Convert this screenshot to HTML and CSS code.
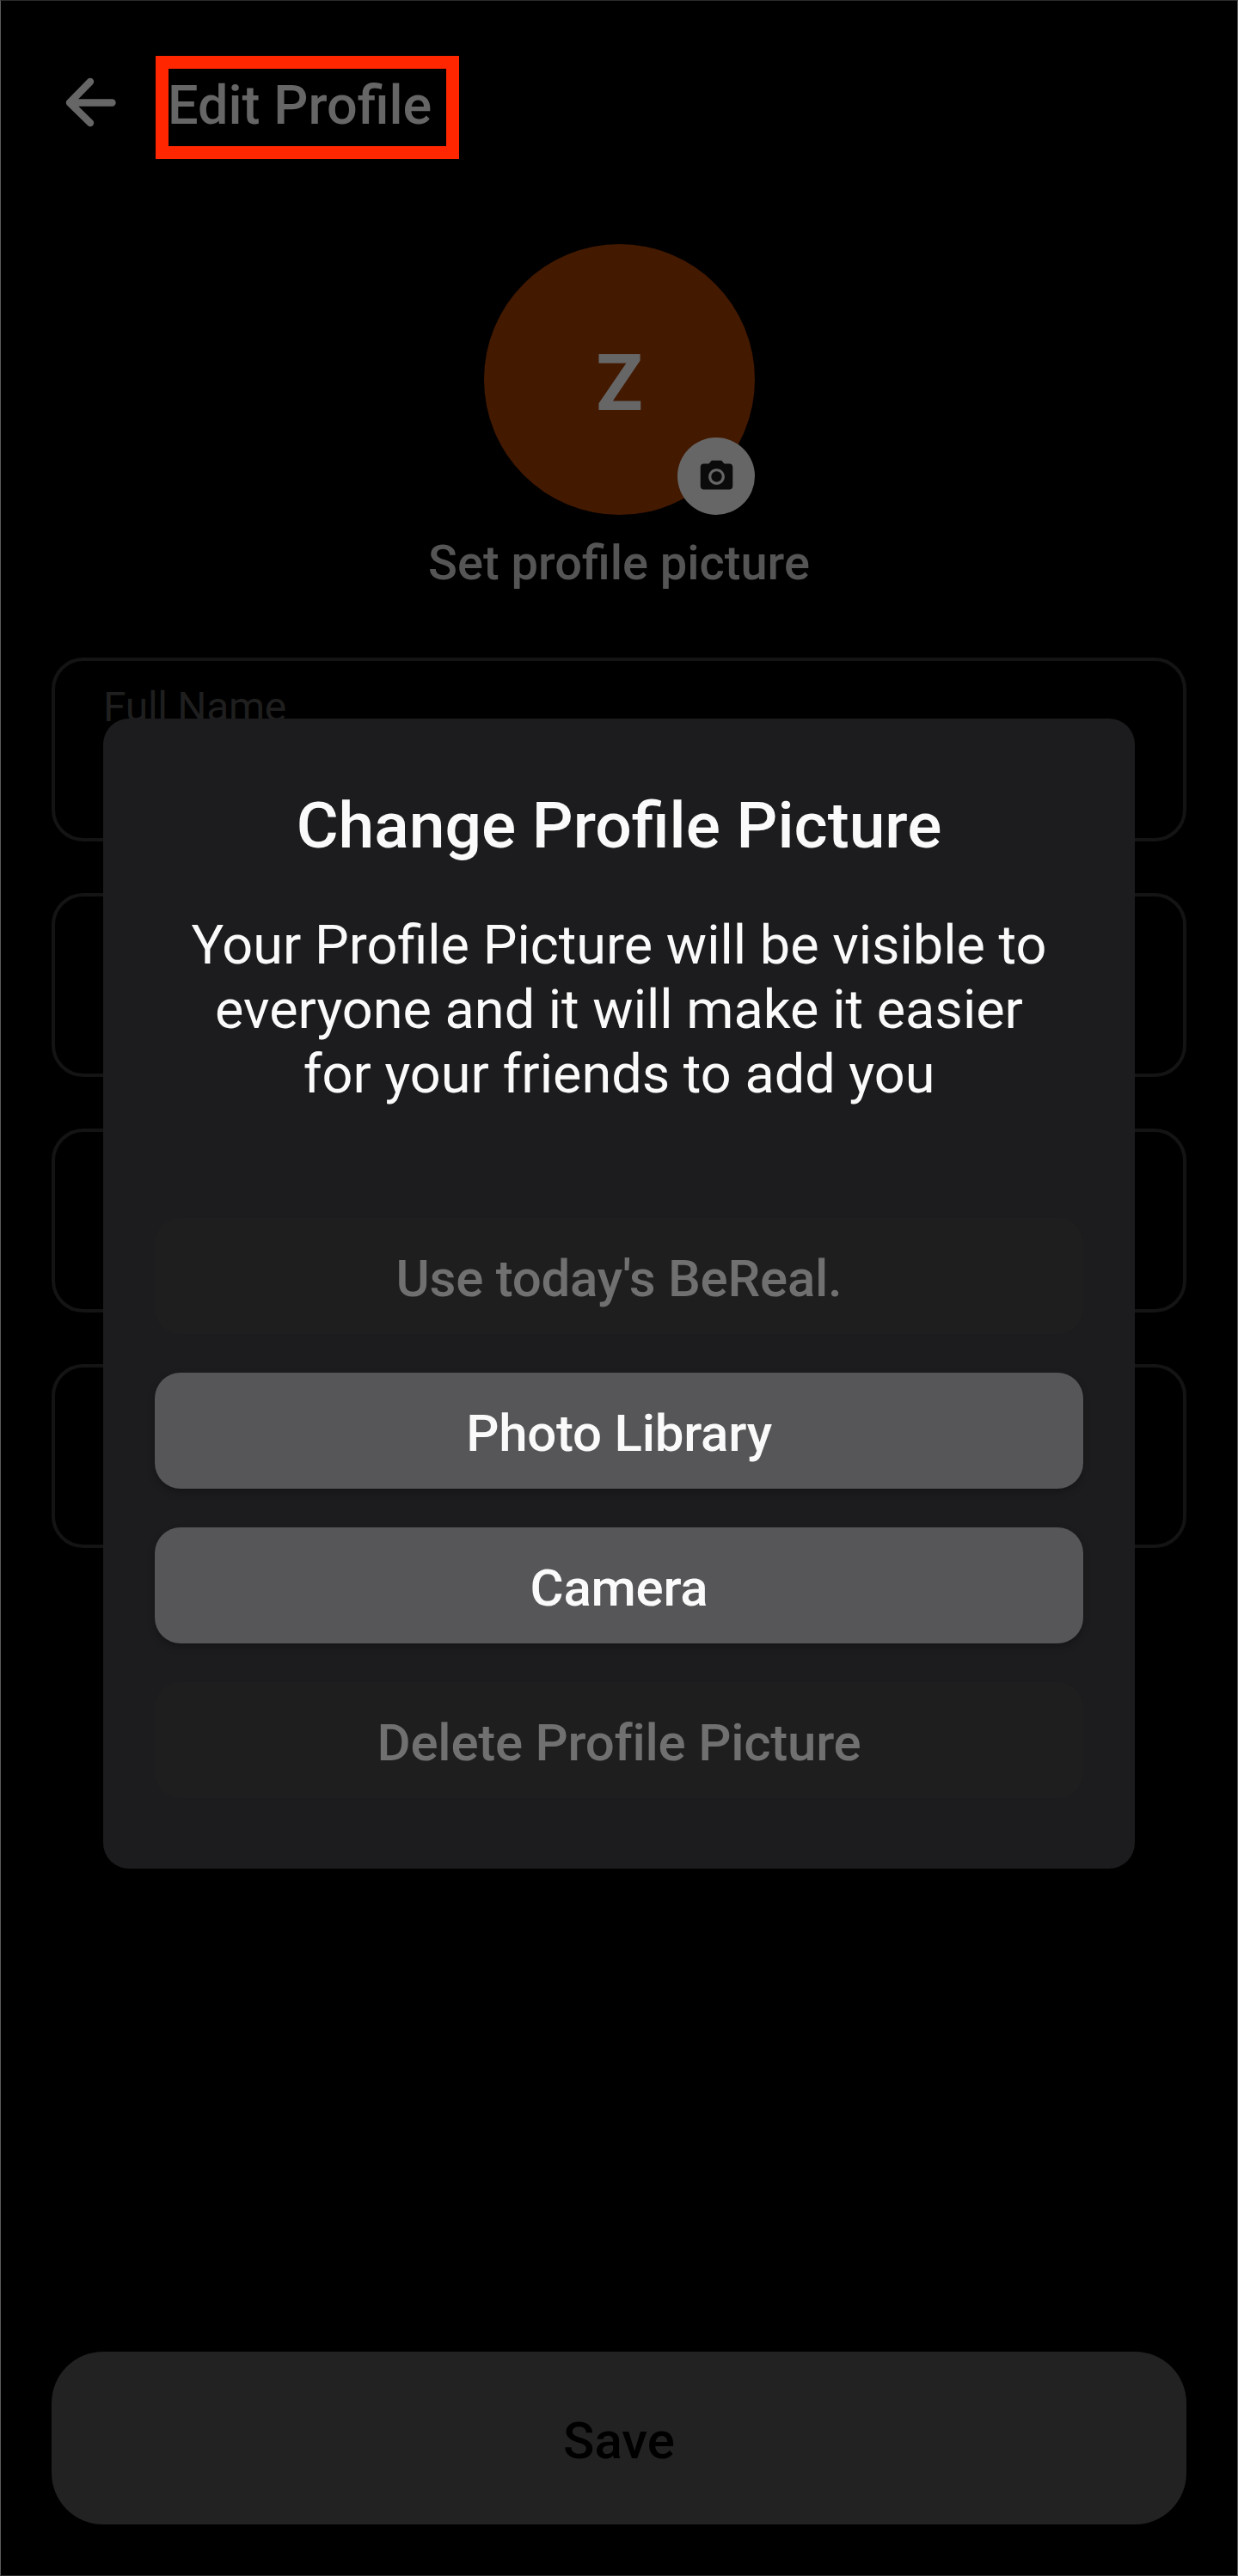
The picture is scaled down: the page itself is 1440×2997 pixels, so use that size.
FILE: index.html
```html
<!DOCTYPE html>
<html lang="en">
<head>
<meta charset="utf-8">
<title>Edit Profile</title>
<link rel="stylesheet" href="styles.css">
</head>
<body>
<div class="screen">
  <header class="header">
    <svg class="back" viewBox="0 0 60 60" fill="none" stroke="#666" stroke-width="8.4" stroke-linecap="round" stroke-linejoin="round"><path d="M29 6L5 30.5L29 54M5 30.5H54.5"/></svg>
    <h1 class="title">Edit Profile</h1>
  </header>
  <section class="profile">
    <div class="avatar">
      <span class="initial">Z</span>
      <span class="badge">
        <svg class="camera" viewBox="0 0 24 24" fill="#0b0b0b"><circle cx="12" cy="12" r="3.3"/><path d="M9 2L7.17 4H4c-1.1 0-2 .9-2 2v12c0 1.100.9 2 2 2h16c1.100 0 2-.9 2-2V6c0-1.100-.9-2-2-2h-3.170L15 2H9zm3 15c-2.760 0-5-2.240-5-5s2.240-5 5-5 5 2.240 5 5-2.240 5-5 5z"/></svg>
      </span>
    </div>
    <p class="caption">Set profile picture</p>
  </section>
  <form class="fields">
    <div class="field"><label class="label">Full Name</label></div>
    <div class="field"></div>
    <div class="field"></div>
    <div class="field"></div>
  </form>
  <button class="save" type="button">Save</button>
  <div class="modal" role="dialog">
    <h2 class="modal-title">Change Profile Picture</h2>
    <p class="modal-text">Your Profile Picture will be visible to<br>everyone and it will make it easier<br>for your friends to add you</p>
    <div class="actions">
      <button class="action disabled" type="button">Use today's BeReal.</button>
      <button class="action" type="button">Photo Library</button>
      <button class="action" type="button">Camera</button>
      <button class="action disabled" type="button">Delete Profile Picture</button>
    </div>
  </div>
</div>
</body>
</html>
```
FILE: styles.css
```css
* { box-sizing: border-box; margin: 0; padding: 0; }
body { background: #000; font-family: Roboto, "Liberation Sans", sans-serif; }
button { border: 0; font-family: inherit; }
.screen {
  position: relative;
  display: flex;
  flex-direction: column;
  width: 1440px;
  height: 2997px;
  padding: 64px 59px 59px;
  border: 1px solid #2c2c2c;
  border-left-color: #5c5c5c;
  border-right-color: #5c5c5c;
  background: #000;
  overflow: hidden;
}
.header { display: flex; align-items: flex-start; gap: 45px; height: 120px; padding-left: 16px; }
.back { width: 60px; height: 60px; margin-top: 24px; flex: none; }
.title {
  width: 353px;
  height: 120px;
  border: 15px solid #ff2600;
  color: #666;
  font-size: 63px;
  font-weight: 500;
  line-height: 86px;
  text-indent: -1px;
  white-space: nowrap;
}
.profile { display: flex; flex-direction: column; align-items: center; margin-top: 99px; }
.avatar {
  position: relative;
  display: flex;
  align-items: center;
  justify-content: center;
  width: 315px;
  height: 315px;
  margin-left: 1px;
  border-radius: 50%;
  background: #431900;
}
.initial { color: #666; font-size: 90px; font-weight: 700; line-height: 105px; padding-top: 9px; }
.badge {
  position: absolute;
  right: 0;
  bottom: 0;
  display: flex;
  align-items: center;
  justify-content: center;
  width: 90px;
  height: 90px;
  border-radius: 50%;
  background: #666;
}
.camera { width: 45px; height: 45px; }
.caption { margin-top: 23px; color: #555; font-size: 56px; font-weight: 500; line-height: 66px; }
.fields { display: flex; flex-direction: column; gap: 60px; margin-top: 77px; }
.field { height: 214px; border: 4px solid #141414; border-radius: 37px; padding: 26px 56px; }
.label { display: block; color: #1f1f1f; font-size: 48px; line-height: 56px; letter-spacing: -0.3px; }
.save {
  height: 201px;
  margin-top: auto;
  padding-top: 6px;
  border-radius: 60px;
  background: #222;
  color: #000;
  font-size: 60px;
  font-weight: 500;
}
.modal {
  position: absolute;
  left: 119px;
  top: 835px;
  width: 1200px;
  height: 1338px;
  padding: 82px 60px;
  border-radius: 30px;
  background: #1c1c1e;
  color: #fafafa;
  text-align: center;
}
.modal-title { font-size: 75px; font-weight: 500; line-height: 84px; }
.modal-text { margin-top: 60px; font-size: 63px; line-height: 75px; white-space: nowrap; }
.actions { display: flex; flex-direction: column; gap: 45px; margin-top: 130px; }
.action {
  height: 135px;
  padding-top: 6px;
  border-radius: 30px;
  background: #565658;
  color: #fafafa;
  font-size: 60px;
  font-weight: 500;
  letter-spacing: -0.25px;
  box-shadow: 0 4px 8px rgba(0, 0, 0, 0.25);
}
.action.disabled { background: #1e1e1e; color: #707070; box-shadow: none; }
```
